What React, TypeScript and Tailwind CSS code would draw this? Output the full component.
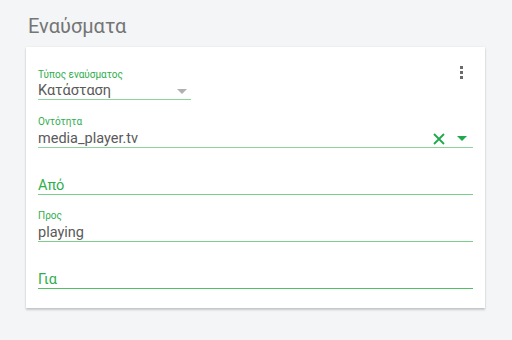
import React from "react";

const Arrow = ({ color }: { color: string }) => (
  <svg width="10" height="5" viewBox="0 0 10 5"><path d="M0 0 L10 0 L5 5 Z" fill={color} /></svg>
);

export default function App() {
  return (
    <div className="w-[512px] h-[340px] bg-[#f4f5f7] overflow-hidden" style={{ fontFamily: "Roboto, 'Noto Sans', sans-serif" }}>
      <div className="pl-[28px] pt-[14px] h-[47px] text-[20px] leading-[24px] text-[#757575]">Εναύσματα</div>
      <div className="relative ml-[26px] w-[459px] bg-white shadow-[0_2px_2px_rgba(0,0,0,0.18),0_0_2px_rgba(0,0,0,0.08)] px-3 pt-[22px] pb-[19px]">
        <div className="absolute right-[12px] top-[13px] w-6 h-6 flex flex-col items-center justify-center gap-[2px]">
          <span className="w-[3px] h-[3px] bg-[#6b6b6b]" />
          <span className="w-[3px] h-[3px] bg-[#6b6b6b]" />
          <span className="w-[3px] h-[3px] bg-[#6b6b6b]" />
        </div>

        <div className="w-[153px] border-b border-[#8fd39c]">
          <div className="h-[12px] text-[10px] leading-[12px] text-[#2fae4e]">Τύπος εναύσματος</div>
          <div className="h-[18px] pt-[2px] flex items-center justify-between text-[14.5px] text-[#5a5a5a]">
            <span>Κατάσταση</span>
            <span className="mr-[4px]"><Arrow color="#b0b0b0" /></span>
          </div>
        </div>

        <div className="mt-[16px] border-b border-[#8fd39c]">
          <div className="h-[12px] text-[10px] leading-[12px] text-[#2fae4e]">Οντότητα</div>
          <div className="h-[19px] pt-[2px] flex items-center justify-between text-[14.5px] text-[#5a5a5a]">
            <span>media_player.tv</span>
            <span className="flex items-center">
              <svg width="12" height="12" viewBox="0 0 12 12" className="mr-[12px]"><path d="M1 1 L11 11 M11 1 L1 11" stroke="#1faa4a" strokeWidth="1.8" /></svg>
              <span className="mr-[6px]"><Arrow color="#1faa4a" /></span>
            </span>
          </div>
        </div>

        <div className="mt-[15px] border-b border-[#7ccd8b]">
          <div className="h-[12px]" />
          <div className="h-[19px] pt-[2px] flex items-center text-[14.5px] text-[#2fae4e]">Από</div>
        </div>

        <div className="mt-[15px] border-b border-[#7ccd8b]">
          <div className="h-[12px] text-[10px] leading-[12px] text-[#2fae4e]">Προς</div>
          <div className="h-[19px] pt-[2px] flex items-center text-[14.5px] text-[#5a5a5a]">playing</div>
        </div>

        <div className="mt-[15px] border-b border-[#52bf66]">
          <div className="h-[12px]" />
          <div className="h-[19px] pt-[2px] flex items-center text-[14.5px] text-[#2fae4e]">Για</div>
        </div>
      </div>
    </div>
  );
}
